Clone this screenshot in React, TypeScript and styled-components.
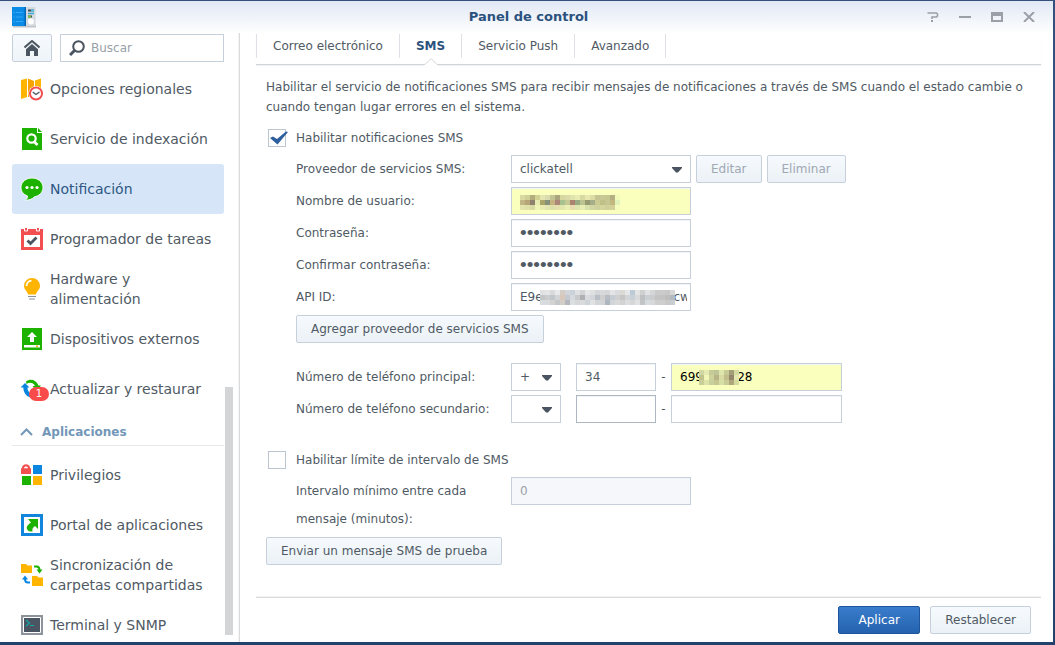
import React from 'react';
import styled, { createGlobalStyle } from 'styled-components';

const GlobalStyle = createGlobalStyle`
  *, *::before, *::after { box-sizing: border-box; }
  body {
    margin: 0;
    background: #23446f;
    color: #505a64;
    font: 12px/20px Verdana, "DejaVu Sans", sans-serif;
  }
  button, input, select { font: inherit; color: inherit; }
`;

const Desktop = styled.div`
  height: 100vh;
  padding: 1px 2px 3px 0;
  background: linear-gradient(#35507c, #2c5a94 50%, #23426b);
`;

const Window = styled.div`
  height: 100%;
  display: flex;
  flex-direction: column;
  background: #fff linear-gradient(#e1e8f4, #fff) no-repeat 0 0 / 100% 33px;
`;

const TitleBar = styled.header`
  flex: none;
  height: 32px;
  display: grid;
  grid-template-columns: 1fr auto 1fr;
  align-items: center;
  padding: 0 8px 0 12px;
`;

const Title = styled.h1`
  margin: 0;
  font-size: 13px;
  line-height: 20px;
  font-weight: bold;
  color: #2b527e;
`;

const WindowControls = styled.div`
  display: flex;
  justify-content: flex-end;
`;

const ControlButton = styled.button`
  width: 32px;
  height: 24px;
  display: flex;
  align-items: center;
  justify-content: center;
  padding: 0;
  border: 0;
  background: none;
  color: #9a9fa8;
`;

const Body = styled.div`
  flex: 1;
  min-height: 0;
  display: flex;
`;

const Sidebar = styled.aside`
  flex: none;
  width: 240px;
  display: flex;
  flex-direction: column;
  padding: 1px 0 7px 12px;
  border-right: 1px solid #d8dadc;
  box-shadow: inset -1px 0 #f4f5f6;
`;

const SearchRow = styled.div`
  flex: none;
  display: flex;
  gap: 8px;
  width: 212px;
  margin-bottom: 2px;
`;

const HomeButton = styled.button`
  width: 40px;
  height: 28px;
  display: flex;
  align-items: center;
  justify-content: center;
  padding: 0;
  border: 1px solid #c6d0da;
  border-radius: 2px;
  background: linear-gradient(#f6fafe, #eef4f9);
`;

const SearchBox = styled.label`
  flex: 1;
  min-width: 0;
  height: 28px;
  display: flex;
  align-items: center;
  gap: 6px;
  padding: 0 8px;
  border: 1px solid #c6d0da;
  background: #fff;
`;

const SearchInput = styled.input`
  flex: 1;
  min-width: 0;
  padding: 0;
  border: 0;
  outline: 0;
  background: none;
  &::placeholder { color: #98a0a8; opacity: 1; }
`;

const NavArea = styled.div`
  flex: 1;
  min-height: 0;
  display: flex;
  gap: 1px;
`;

const Nav = styled.nav`
  width: 212px;
  overflow: hidden;
`;

const NavList = styled.ul`
  margin: 0;
  padding: 0;
  list-style: none;
`;

const NavLink = styled.a<{ $active?: boolean }>`
  height: 50px;
  display: flex;
  align-items: center;
  gap: 6px;
  padding-left: 8px;
  border-radius: 3px;
  font-size: 14px;
  line-height: 20px;
  text-decoration: none;
  color: ${p => (p.$active ? '#2f5684' : '#505a64')};
  background: ${p => (p.$active ? '#d6e6f8' : 'transparent')};
  svg { flex: none; }
`;

const NavIcon = styled.span`
  position: relative;
  display: flex;
  width: 24px;
  height: 24px;
`;

const NavText = styled.span`
  flex: 1;
  min-width: 0;
`;

const Badge = styled.span`
  position: absolute;
  left: 9px;
  top: 10px;
  width: 20px;
  height: 14px;
  border-radius: 7px;
  background: #fa4b4b;
  color: #fff;
  font-size: 10px;
  line-height: 14px;
  text-align: center;
`;

const GroupButton = styled.button`
  width: 100%;
  height: 32px;
  display: flex;
  align-items: center;
  gap: 8px;
  margin-bottom: 4px;
  padding: 4px 0 0 8px;
  border: 0;
  border-bottom: 1px solid #e6e9ec;
  background: none;
  font-weight: bold;
  color: #7397b8;
`;

const ScrollTrack = styled.div`
  width: 8px;
  display: flex;
  flex-direction: column;
  justify-content: flex-end;
`;

const ScrollThumb = styled.div`
  height: 248px;
  background: #d3d5d7;
`;

const Main = styled.main`
  flex: 1;
  min-width: 0;
  display: flex;
  flex-direction: column;
  padding: 1px 12px 0 16px;
`;

const Tabs = styled.div`
  flex: none;
  display: flex;
  height: 31px;
  border-bottom: 1px solid #d2d5d8;
  box-shadow: 0 1px 1px #f0f1f2;
`;

const Tab = styled.button<{ $active?: boolean }>`
  position: relative;
  height: 24px;
  padding: 0 16px;
  border: 0;
  border-right: 1px solid #dde1e5;
  background: none;
  line-height: 20px;
  font-weight: ${p => (p.$active ? 'bold' : 'normal')};
  color: ${p => (p.$active ? '#2b527e' : '#505a64')};
  &:first-child { border-left: 1px solid #dde1e5; }
`;

const Notch = styled.svg`
  position: absolute;
  left: calc(50% - 7px);
  top: 24px;
`;

const Content = styled.div`
  flex: 1;
  min-height: 0;
  overflow: hidden;
  padding: 12px 10px 0;
`;

const Intro = styled.p`
  margin: 0 0 11px;
`;

const CheckRow = styled.label`
  display: flex;
  align-items: center;
  gap: 10px;
  height: 20px;
  padding-left: 2px;
`;

const Check = styled.span`
  position: relative;
  display: flex;
`;

const CheckInput = styled.input`
  appearance: none;
  width: 18px;
  height: 18px;
  margin: 0;
  border: 1px solid #bcc6d0;
  background: #fff;
  & + svg { display: none; position: absolute; left: 1px; top: 1px; pointer-events: none; }
  &:checked + svg { display: block; }
`;

const FieldGroup = styled.div<{ $top: number }>`
  display: flex;
  flex-direction: column;
  align-items: flex-start;
  gap: 4px;
  margin-top: ${p => p.$top}px;
  padding-left: 30px;
`;

const LimitBlock = styled.div`
  margin-top: 27px;
`;

const FieldRow = styled.div`
  display: flex;
  gap: 5px;
`;

const FieldLabel = styled.label`
  flex: none;
  width: 210px;
  padding-right: 10px;
  line-height: 28px;
`;

const Control = styled.span<{ $width: number }>`
  position: relative;
  flex: none;
  width: ${p => p.$width}px;
  height: 28px;
`;

const TextInput = styled.input<{ $filled?: boolean; $strong?: boolean }>`
  display: block;
  width: 100%;
  height: 28px;
  padding: 0 3px 0 8px;
  border: 1px solid ${p => (p.$strong ? '#adb7c1' : '#c6d0da')};
  border-radius: 0;
  outline: 0;
  background: ${p => (p.$filled ? '#faffbd' : '#fff')};
  color: ${p => (p.$filled ? '#000' : '#505a64')};
  box-shadow: inset 0 1px #f3f4f5;
  &:disabled { background: #f6f7fa; color: #9aa1a9; }
  &[type='password'] { font-family: "Liberation Sans", Arial, sans-serif; font-size: 19px; }
`;

const SelectBox = styled.select`
  appearance: none;
  display: block;
  width: 100%;
  height: 28px;
  padding: 0 20px 0 8px;
  border: 1px solid #c6d0da;
  border-radius: 0;
  outline: 0;
  background: #fff;
`;

const Arrow = styled.svg`
  position: absolute;
  right: 8px;
  top: 12px;
  pointer-events: none;
`;

const Button = styled.button<{ $primary?: boolean }>`
  height: 28px;
  padding: 0 14px;
  border: 1px solid ${p => (p.$primary ? '#1f559c' : '#c6d0da')};
  border-radius: 2px;
  background: ${p => (p.$primary ? 'linear-gradient(#3a7dcc, #2462ae)' : 'linear-gradient(#f6fafe, #ebf1f6)')};
  color: ${p => (p.$primary ? '#fff' : '#505a64')};
  white-space: nowrap;
  &:disabled { color: #a0a8b2; }
`;

const WideButton = styled(Button)`
  min-width: 82px;
`;

const PhoneFields = styled.div`
  display: flex;
`;

const Gap = styled.span`
  flex: none;
  width: 15px;
  text-align: center;
  line-height: 28px;
`;

const TestRow = styled.div`
  margin-top: 4px;
`;

const Footer = styled.footer`
  flex: none;
  display: flex;
  justify-content: flex-end;
  gap: 10px;
  padding: 8px 10px;
  border-top: 1px solid #d8dadc;
  box-shadow: 0 -1px #f2f3f4;
`;

const Mosaic = styled.svg`
  position: absolute;
  pointer-events: none;
`;

function Pixels({ rows, cell, left, top }: { rows: string[]; cell: number; left: number; top: number }) {
  const grid = rows.map(r => r.split(' '));
  return (
    <Mosaic
      style={{ left, top }}
      width={grid[0].length * cell}
      height={grid.length * cell}
      shapeRendering="crispEdges"
      aria-hidden="true"
    >
      {grid.map((r, y) =>
        r.map((c, x) => <rect key={`${x}.${y}`} x={x * cell} y={y * cell} width={cell} height={cell} fill={`#${c}`} />),
      )}
    </Mosaic>
  );
}

const userPixels = [
  'd9daa0 cfcf98 b3ad7c d0d093 e3e6b0 d9dcae c3c493 aba47c d6d8a0 dcdaa8 dfe3ac e8ecb2 d9daa2 e6e8b0 dcdca5 c4c592 cac796 c6c691 b5ae83 f3fbbb',
  'bfb585 b8a577 8e826e e7ebb2 aba568 87927a c4b37e ac8676 a7c28e c5c993 ac8370 98ab83 bbc490 979a70 a5ae88 c9cb92 bfc088 c5c690 c2b77e e0f1b9',
  'e3e5ac dfe0aa d8daa4 f0f5b7 e9ecb0 e3e6b0 dde0a8 e6dfae e3e7ae eaefb2 e9ddb0 dee7b0 e7edb3 d6e0aa d2d6a2 cfd29d d4d59c d0d09a d3cf98 f5fcbb',
];

const apiPixels = [
  'dfe1e3 e3e4e5 d9dadb e9e9ea d5cdc5 d2d6da c9d1d9 dfe1e3 d4d4d4 e6e7e8 dfe0e0 d2d6d9 d8d9da d6d6d6 e3e4e6 d9dbdd dcd8d3 e5e6e7 bccad6 e3e4e4 d0d0d0 e1e2e3 d5d6d8 cacaca cbcbcb c8c8c8 d6d6d6',
  'c4c5c7 cbcccd c1c7cb d3d4d5 d8c8bb c3c9cf d6dade c9cacc aeb0b3 d9dbde d2d6db b9bfc6 cfcfd0 b7bdc3 c5ccd3 cfd0d1 c6c6c6 d2d4d6 c9d0d6 d9dadb bfc0c1 c9cfd5 cbccce c4c4c4 c3c3c3 bebebe b2bac1',
  'd9dcdf d9dadb d2d2d2 c5c7c9 d3cdc8 b4b8bc dcdfe1 d5d7d9 dadbdc cfd4da e0e1e3 d4d5d6 d2d4d6 adb7c0 d1d5d9 d9d9d9 d3d3d3 dcdddf d7d7d7 e0e1e2 c2c4c6 d8dbde d7d8d9 cdcdcd cfcfcf c9c9c9 cacdd0',
];

const phonePixels = [
  'd0d7a0 e5ebb0 c6cc97 bec596 dfe6ac c6cb96 a49e78 d5dba0',
  'bfc48c f2f6b8 ced39c b8b485 d8dca4 c2bd8b 94866b e5e9b0',
  'c9cf96 dce2a8 c8d09b c6c690 d6e0a4 c9cc96 b0a67c d3da9e',
];

function DropArrow() {
  return (
    <Arrow width="12" height="6" aria-hidden="true">
      <path d="M1 0H11V1L7 5.500H5L1 1Z" fill="#4b5561" />
    </Arrow>
  );
}

function AppIcon() {
  return (
    <svg width="24" height="22" viewBox="0 0 24 22" aria-hidden="true">
      <path d="M1 19H24V21.500H1Z" fill="#c2c5c8" />
      <path d="M14 1H23.500V20H14Z" fill="#d3d9de" />
      <path d="M0 1H14V20H0Z" fill="#0a8be6" />
      <path d="M12.500 1H14V20H12.500Z" fill="#0067b8" />
      <path d="M1.500 6.500H3M4 6.500H11M1.500 11H3M4 11H11M1.500 15.500H3M4 15.500H11" stroke="#37a6f5" />
      <path d="M16 4.500H22M16 10.500H20" stroke="#3b4a55" strokeWidth="2" />
      <path d="M16 7.500H22" stroke="#3ca9d8" strokeWidth="1.500" />
      <path d="M19 4.500H22" stroke="#55c4ea" strokeWidth="2" />
      <path d="M16 10.500H19" stroke="#7bc043" strokeWidth="2" />
      <circle cx="19" cy="15.500" r="3" fill="#fff" />
    </svg>
  );
}

const icons = {
  region: (
    <svg width="24" height="24" viewBox="0 0 24 24">
      <path d="M1 3L7 1.500V20L1 22Z" fill="#ffb400" />
      <path d="M8 1.500L14 4V20L8 20Z" fill="#f7a400" />
      <path d="M15 3.500L21 1.500V14H15Z" fill="#ffb400" />
      <circle cx="16" cy="16.500" r="7.500" fill="#fff" />
      <circle cx="16" cy="16.500" r="6" fill="#fff" stroke="#ef5050" strokeWidth="2" />
      <path d="M12.800 15L16 17.500L19.500 15" fill="none" stroke="#4b5561" strokeWidth="1.400" />
    </svg>
  ),
  index: (
    <svg width="24" height="24" viewBox="0 0 24 24">
      <path d="M2 1H17V6H22V23H2Z" fill="#1db100" />
      <path d="M18 1L22 5H18Z" fill="#1db100" />
      <circle cx="11.500" cy="11.500" r="4.200" fill="none" stroke="#fff" strokeWidth="2.200" />
      <path d="M14 14.500L17.500 18" stroke="#fff" strokeWidth="2.600" />
    </svg>
  ),
  notification: (
    <svg width="24" height="24" viewBox="0 0 24 24">
      <path d="M12 1C18 1 23 5 23 10.500C23 15.500 19 19 14.500 19.800C12 22.500 8 23.500 5.500 23C7 22 7.800 20.500 7.500 19C3.500 17.500 1 14.500 1 10.500C1 5 6 1 12 1Z" fill="#1db100" stroke="#f2fbef" />
      <circle cx="7" cy="10.500" r="1.600" fill="#fff" />
      <circle cx="12" cy="10.500" r="1.600" fill="#fff" />
      <circle cx="17" cy="10.500" r="1.600" fill="#fff" />
    </svg>
  ),
  task: (
    <svg width="24" height="24" viewBox="0 0 24 24">
      <path d="M1 2H23V23H1Z" fill="#f25050" />
      <path d="M4 8H20V20H4Z" fill="#fff" />
      <path d="M4.500 0.500H7.500V4H4.500ZM16.500 0.500H19.500V4H16.500Z" fill="#f25050" stroke="#fff" />
      <path d="M7.500 13.500L10.500 16.500L16.500 10.500" fill="none" stroke="#4b5561" strokeWidth="2.800" />
    </svg>
  ),
  hardware: (
    <svg width="24" height="24" viewBox="0 0 24 24">
      <path d="M12 1A8 8 0 0 1 20 9C20 13 16.500 14 16 17.500H8C7.500 14 4 13 4 9A8 8 0 0 1 12 1Z" fill="#ffb400" />
      <path d="M6.500 9A5.500 5.500 0 0 1 11.500 3.600" fill="none" stroke="#fff" strokeWidth="1.800" />
      <path d="M8 19.500H16M9 22H15" stroke="#8a9097" strokeWidth="1.200" />
    </svg>
  ),
  external: (
    <svg width="24" height="24" viewBox="0 0 24 24">
      <path d="M2 1H22V23H2Z" fill="#1db100" />
      <path d="M12 5L17 10H14V15H10V10H7Z" fill="#fff" />
      <path d="M4 18H20V20.500H4Z" fill="#fff" />
      <path d="M16 18.600H18V20H16Z" fill="#ffb400" />
    </svg>
  ),
  update: (
    <svg width="24" height="24" viewBox="0 0 24 24">
      <path d="M6 4.500C10 1.500 16 2.500 18.500 8.500H21L17 14L12.500 9H15C13.500 6 10 4.800 6.500 7Z" fill="#1db100" />
      <path d="M5 6L9.500 10.500H7.500C7.500 14.500 10 17 14 17L13 21C7.500 20.500 3.500 17 3.300 10.500H0.500Z" fill="#0a86e0" />
    </svg>
  ),
  privileges: (
    <svg width="24" height="24" viewBox="0 0 24 24">
      <path d="M1 6Q1 5 2 5C2 0 10 0 10 5Q11 5 11 6V11H1Z" fill="#f25050" />
      <path d="M4 5.200C4 3 8 3 8 5.200Z" fill="#fff" />
      <path d="M13 2H22V11H13Z" fill="#0a86e0" />
      <path d="M2 13H11V22H2Z" fill="#1db100" />
      <path d="M13 13H22V22H13Z" fill="#ffb400" />
    </svg>
  ),
  portal: (
    <svg width="24" height="24" viewBox="0 0 24 24">
      <path d="M2.500 2.500H21.500V21.500H2.500Z" fill="#fff" stroke="#1285dd" strokeWidth="3" />
      <path d="M8 6H18V16L15 13C12.500 14.500 12 16.500 12.500 18.500C8.500 19 6 16.500 7 13.500C8 11.500 9.500 10.500 11 9.500Z" fill="#1db100" />
    </svg>
  ),
  sync: (
    <svg width="24" height="24" viewBox="0 0 24 24">
      <path d="M1 1H6L7.500 2.500H12V10H1Z" fill="#ffb400" />
      <path d="M12 13H17L18.500 14.500H23V23H12Z" fill="#ffb400" />
      <path d="M14 3.500H16.500C18.500 3.500 19.500 4.500 19.500 7" fill="none" stroke="#1db100" strokeWidth="2" />
      <path d="M16.500 6.500H22.500L19.500 10.500Z" fill="#1db100" />
      <path d="M10 19.500H8C6 19.500 5 18.500 5 16" fill="none" stroke="#0a86e0" strokeWidth="2" />
      <path d="M2 16.500H8L5 12.500Z" fill="#0a86e0" />
    </svg>
  ),
  terminal: (
    <svg width="24" height="24" viewBox="0 0 24 24">
      <path d="M1 2H23V22H1Z" fill="#8c939b" />
      <path d="M3.500 4.500H20.500V19.500H3.500Z" fill="#4b5561" stroke="#fff" />
      <path d="M6 7L9.500 10L6 13M10 12.500H14" fill="none" stroke="#14a5a5" strokeWidth="1.200" />
    </svg>
  ),
};

type Entry = { icon: keyof typeof icons; text: string; active?: boolean; badge?: string };

const systemItems: Entry[] = [
  { icon: 'region', text: 'Opciones regionales' },
  { icon: 'index', text: 'Servicio de indexación' },
  { icon: 'notification', text: 'Notificación', active: true },
  { icon: 'task', text: 'Programador de tareas' },
  { icon: 'hardware', text: 'Hardware y alimentación' },
  { icon: 'external', text: 'Dispositivos externos' },
  { icon: 'update', text: 'Actualizar y restaurar', badge: '1' },
];

const appItems: Entry[] = [
  { icon: 'privileges', text: 'Privilegios' },
  { icon: 'portal', text: 'Portal de aplicaciones' },
  { icon: 'sync', text: 'Sincronización de carpetas compartidas' },
  { icon: 'terminal', text: 'Terminal y SNMP' },
];

function Entries({ items }: { items: Entry[] }) {
  return (
    <NavList>
      {items.map(item => (
        <li key={item.text}>
          <NavLink href="#" $active={item.active} aria-current={item.active ? 'page' : undefined}>
            <NavIcon>
              {icons[item.icon]}
              {item.badge && <Badge>{item.badge}</Badge>}
            </NavIcon>
            <NavText>{item.text}</NavText>
          </NavLink>
        </li>
      ))}
    </NavList>
  );
}

export default function App() {
  return (
    <Desktop>
      <GlobalStyle />
      <Window>
        <TitleBar>
          <AppIcon />
          <Title>Panel de control</Title>
          <WindowControls>
            <ControlButton type="button" aria-label="Ayuda">
              <svg width="12" height="10" fill="none" stroke="currentColor">
                <path d="M0.500 1H9.500L10.500 2V4L9.500 5H5V7" strokeWidth="1.600" />
                <path d="M4 9H6" strokeWidth="2" />
              </svg>
            </ControlButton>
            <ControlButton type="button" aria-label="Minimizar">
              <svg width="12" height="10"><path d="M0 4H12V6H0Z" fill="currentColor" /></svg>
            </ControlButton>
            <ControlButton type="button" aria-label="Maximizar">
              <svg width="12" height="10"><path d="M0 0H12V10H0ZM2 4V8H10V4Z" fill="currentColor" fillRule="evenodd" /></svg>
            </ControlButton>
            <ControlButton type="button" aria-label="Cerrar">
              <svg width="12" height="10"><path d="M1 0L11 10M11 0L1 10" stroke="currentColor" strokeWidth="2" /></svg>
            </ControlButton>
          </WindowControls>
        </TitleBar>
        <Body>
          <Sidebar>
            <SearchRow>
              <HomeButton type="button" aria-label="Inicio">
                <svg width="16" height="16" viewBox="0 0 16 16" fill="none">
                  <path d="M0.500 7.500L8 1L15.500 7.500" stroke="#4b5561" strokeWidth="2" />
                  <path d="M2 9.300L8 4L14 9.300V16H10V11H6V16H2Z" fill="#4b5561" />
                </svg>
              </HomeButton>
              <SearchBox>
                <svg width="16" height="16" viewBox="0 0 16 16" fill="none" stroke="#4b5561" aria-hidden="true">
                  <circle cx="9.500" cy="6.500" r="5.300" strokeWidth="2" />
                  <path d="M5.500 10.500L1 15" strokeWidth="3" />
                </svg>
                <SearchInput type="text" placeholder="Buscar" aria-label="Buscar" />
              </SearchBox>
            </SearchRow>
            <NavArea>
              <Nav>
                <Entries items={systemItems} />
                <GroupButton type="button">
                  <svg width="14" height="8" fill="none" stroke="#7397b8" strokeWidth="2">
                    <path d="M1 7L6.500 1.500L12 7" />
                  </svg>
                  Aplicaciones
                </GroupButton>
                <Entries items={appItems} />
              </Nav>
              <ScrollTrack>
                <ScrollThumb />
              </ScrollTrack>
            </NavArea>
          </Sidebar>
          <Main>
            <Tabs role="tablist">
              <Tab type="button" role="tab">Correo electrónico</Tab>
              <Tab type="button" role="tab" aria-selected="true" $active>
                SMS
                <Notch width="14" height="8" aria-hidden="true">
                  <path d="M0 8V6.500L1 6.500L7 0.500L13 6.500H14V8Z" fill="#fff" />
                  <path d="M0 6.500H1L7 0.500L13 6.500H14" fill="none" stroke="#d2d5d8" />
                </Notch>
              </Tab>
              <Tab type="button" role="tab">Servicio Push</Tab>
              <Tab type="button" role="tab">Avanzado</Tab>
            </Tabs>
            <Content>
              <Intro>
                Habilitar el servicio de notificaciones SMS para recibir mensajes de notificaciones a través de SMS
                cuando el estado cambie o cuando tengan lugar errores en el sistema.
              </Intro>
              <CheckRow>
                <Check>
                  <CheckInput type="checkbox" defaultChecked />
                  <svg width="20" height="16" aria-hidden="true">
                    <path d="M1 8L4 6.500L8 9L17 1.500L19 2L8.500 14.500Z" fill="#2d5f9e" />
                  </svg>
                </Check>
                Habilitar notificaciones SMS
              </CheckRow>
              <FieldGroup $top={7}>
                <FieldRow>
                  <FieldLabel htmlFor="provider">Proveedor de servicios SMS:</FieldLabel>
                  <Control $width={180}>
                    <SelectBox id="provider"><option>clickatell</option></SelectBox>
                    <DropArrow />
                  </Control>
                  <Button type="button" disabled>Editar</Button>
                  <Button type="button" disabled>Eliminar</Button>
                </FieldRow>
                <FieldRow>
                  <FieldLabel htmlFor="user">Nombre de usuario:</FieldLabel>
                  <Control $width={180}>
                    <TextInput id="user" type="text" $filled />
                    <Pixels rows={userPixels} cell={5} left={9} top={8} />
                  </Control>
                </FieldRow>
                <FieldRow>
                  <FieldLabel htmlFor="password">Contraseña:</FieldLabel>
                  <Control $width={180}>
                    <TextInput id="password" type="password" defaultValue="12345678" />
                  </Control>
                </FieldRow>
                <FieldRow>
                  <FieldLabel htmlFor="confirm">Confirmar contraseña:</FieldLabel>
                  <Control $width={180}>
                    <TextInput id="confirm" type="password" defaultValue="12345678" />
                  </Control>
                </FieldRow>
                <FieldRow>
                  <FieldLabel htmlFor="api">API ID:</FieldLabel>
                  <Control $width={180}>
                    <TextInput id="api" type="text" defaultValue={`E9e${' '.repeat(34)}\u200acw`} />
                    <Pixels rows={apiPixels} cell={5} left={29} top={7} />
                  </Control>
                </FieldRow>
                <Button type="button">Agregar proveedor de servicios SMS</Button>
              </FieldGroup>
              <FieldGroup $top={20}>
                <FieldRow>
                  <FieldLabel htmlFor="phone1">Número de teléfono principal:</FieldLabel>
                  <PhoneFields>
                    <Control $width={50}>
                      <SelectBox aria-label="Prefijo principal"><option>+</option></SelectBox>
                      <DropArrow />
                    </Control>
                    <Gap />
                    <Control $width={80}>
                      <TextInput type="text" aria-label="Código de país principal" defaultValue="34" />
                    </Control>
                    <Gap>-</Gap>
                    <Control $width={171}>
                      <TextInput id="phone1" type="text" $filled defaultValue={`699${' '.repeat(9)}28`} />
                      <Pixels rows={phonePixels} cell={5} left={28} top={7} />
                    </Control>
                  </PhoneFields>
                </FieldRow>
                <FieldRow>
                  <FieldLabel htmlFor="phone2">Número de teléfono secundario:</FieldLabel>
                  <PhoneFields>
                    <Control $width={50}>
                      <SelectBox aria-label="Prefijo secundario"><option></option></SelectBox>
                      <DropArrow />
                    </Control>
                    <Gap />
                    <Control $width={80}>
                      <TextInput type="text" aria-label="Código de país secundario" $strong />
                    </Control>
                    <Gap>-</Gap>
                    <Control $width={171}>
                      <TextInput id="phone2" type="text" />
                    </Control>
                  </PhoneFields>
                </FieldRow>
              </FieldGroup>
              <LimitBlock>
                <CheckRow>
                  <Check>
                    <CheckInput type="checkbox" />
                  </Check>
                  Habilitar límite de intervalo de SMS
                </CheckRow>
                <FieldGroup $top={7}>
                  <FieldRow>
                    <FieldLabel htmlFor="interval">Intervalo mínimo entre cada mensaje (minutos):</FieldLabel>
                    <Control $width={180}>
                      <TextInput id="interval" type="text" defaultValue="0" disabled />
                    </Control>
                  </FieldRow>
                </FieldGroup>
              </LimitBlock>
              <TestRow>
                <Button type="button">Enviar un mensaje SMS de prueba</Button>
              </TestRow>
            </Content>
            <Footer>
              <WideButton type="button" $primary>Aplicar</WideButton>
              <Button type="button">Restablecer</Button>
            </Footer>
          </Main>
        </Body>
      </Window>
    </Desktop>
  );
}
